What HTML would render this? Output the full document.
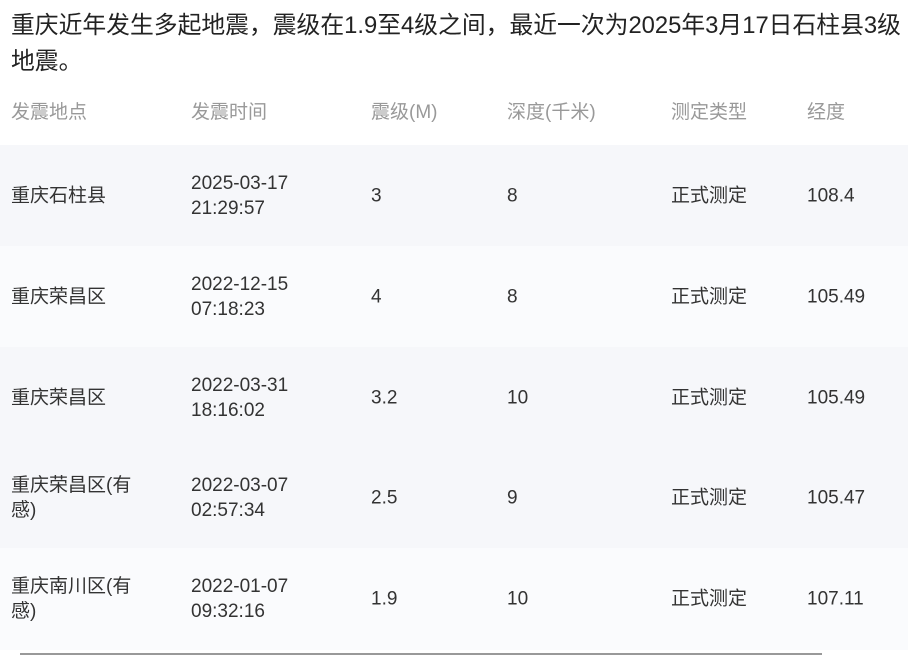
<!DOCTYPE html>
<html><head><meta charset="utf-8"><style>
body{margin:0;width:908px;height:656px;overflow:hidden;background:#fff;font-family:"Liberation Sans","Noto Sans CJK SC",sans-serif;color:#333;position:relative}
.t{position:absolute;left:11px;top:8px;width:900px;font-size:23.8px;line-height:36px;color:#222;white-space:nowrap}
.h{position:absolute;top:100px;font-size:19px;color:#999;line-height:26px}
.r{position:absolute;left:0;width:908px;height:101px}
.c{position:absolute;font-size:19px;line-height:25px;top:50%;transform:translateY(-50%);color:#333}
.sb{position:absolute;left:20px;top:653px;width:802px;height:2px;background:#999}
</style></head><body>
<div class="t">重庆近年发生多起地震，震级在1.9至4级之间，最近一次为2025年3月17日石柱县3级<br>地震。</div>
<div class="h" style="left:11px">发震地点</div>
<div class="h" style="left:191px">发震时间</div>
<div class="h" style="left:371px">震级(M)</div>
<div class="h" style="left:507px">深度(千米)</div>
<div class="h" style="left:671px">测定类型</div>
<div class="h" style="left:807px">经度</div>

<div class="r" style="top:145px;background:#f6f7fa">
<div class="c" style="left:11px">重庆石柱县</div><div class="c" style="left:191px">2025-03-17<br>21:29:57</div><div class="c" style="left:371px">3</div><div class="c" style="left:507px">8</div><div class="c" style="left:671px">正式测定</div><div class="c" style="left:807px">108.4</div></div>
<div class="r" style="top:246px;background:#fafbfd">
<div class="c" style="left:11px">重庆荣昌区</div><div class="c" style="left:191px">2022-12-15<br>07:18:23</div><div class="c" style="left:371px">4</div><div class="c" style="left:507px">8</div><div class="c" style="left:671px">正式测定</div><div class="c" style="left:807px">105.49</div></div>
<div class="r" style="top:347px;background:#f6f7fa">
<div class="c" style="left:11px">重庆荣昌区</div><div class="c" style="left:191px">2022-03-31<br>18:16:02</div><div class="c" style="left:371px">3.2</div><div class="c" style="left:507px">10</div><div class="c" style="left:671px">正式测定</div><div class="c" style="left:807px">105.49</div></div>
<div class="r" style="top:448px;height:100px;background:#f6f7fa">
<div class="c" style="left:11px">重庆荣昌区(有<br>感)</div><div class="c" style="left:191px">2022-03-07<br>02:57:34</div><div class="c" style="left:371px">2.5</div><div class="c" style="left:507px">9</div><div class="c" style="left:671px">正式测定</div><div class="c" style="left:807px">105.47</div></div>
<div class="r" style="top:548px;height:102px;background:#fafbfd">
<div class="c" style="left:11px">重庆南川区(有<br>感)</div><div class="c" style="left:191px">2022-01-07<br>09:32:16</div><div class="c" style="left:371px">1.9</div><div class="c" style="left:507px">10</div><div class="c" style="left:671px">正式测定</div><div class="c" style="left:807px">107.11</div></div>
<div class="sb"></div>
</body></html>
